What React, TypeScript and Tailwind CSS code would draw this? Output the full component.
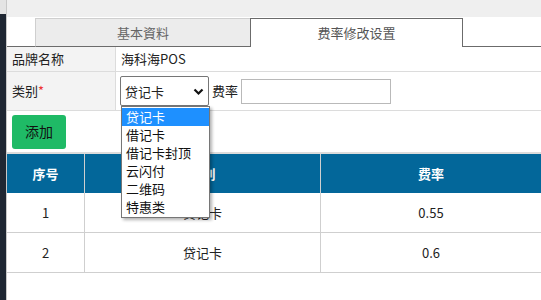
import { ReactNode } from "react";

const FONT = { fontFamily: '"Microsoft YaHei", "Noto Sans CJK SC", "Noto Sans", sans-serif' };

const OPTIONS = ["贷记卡", "借记卡", "借记卡封顶", "云闪付", "二维码", "特惠类"];

const ROWS = [
  { no: "1", type: "贷记卡", rate: "0.55" },
  { no: "2", type: "贷记卡", rate: "0.6" },
];

function Chevron() {
  return (
    <svg width="11" height="8" viewBox="0 0 11 8" className="shrink-0">
      <path d="M1.5 1.5 L5.5 5.5 L9.5 1.5" fill="none" stroke="#111" strokeWidth="2.2" />
    </svg>
  );
}

function Cell({ children, className = "" }: { children: ReactNode; className?: string }) {
  return <div className={"flex items-center justify-center " + className}>{children}</div>;
}

export default function App() {
  return (
    <div className="relative flex h-[300px] w-[541px] overflow-hidden bg-white text-[13px] text-[#222]" style={FONT}>
      {/* left window edge */}
      <div className="flex w-[6px] flex-col">
        <div className="h-[14px] bg-[#e4e4e4]" />
        <div className="flex-1 bg-[#1f2733]" />
      </div>
      <div className="w-px bg-[#c8c8c8]" />

      <div className="flex flex-1 flex-col">
        <div className="h-[17px] bg-[#efefef]" />

        {/* tabs */}
        <div className="flex h-[30px]">
          <div className="w-[28px] border-b border-[#6b6b6b]" />
          <div className="mt-px flex w-[215px] items-center justify-center border-l border-t border-[#cfcfcf] border-b-[#6b6b6b] border-b bg-[#ececec] text-[#666]">
            基本資料
          </div>
          <div className="mt-px flex w-[213px] items-center justify-center border-x border-t border-[#6b6b6b] bg-white text-[#555]">
            费率修改设置
          </div>
          <div className="flex-1 border-b border-[#6b6b6b]" />
        </div>

        {/* info rows */}
        <div className="flex h-[25px] border-b border-[#dcdcdc]">
          <div className="flex w-[109px] items-center border-r border-[#dcdcdc] bg-[#f3f3f3] pl-[5px]">品牌名称</div>
          <div className="flex items-center pl-[5px]">海科海POS</div>
        </div>
        <div className="flex h-[39px] border-b border-[#dcdcdc]">
          <div className="flex w-[109px] items-center border-r border-[#dcdcdc] bg-[#f3f3f3] pl-[5px]">
            类别<span className="text-[#e33]">*</span>
          </div>
          <div className="flex items-center pl-[4px]">
            <div className="flex h-[30px] w-[89px] items-center justify-between rounded-[2px] border border-[#767676] px-[4px] pt-[1px]">
              <span>贷记卡</span>
              <Chevron />
            </div>
            <span className="ml-[3px]">费率</span>
            <div className="ml-[3px] h-[25px] w-[150px] border border-[#b9b9b9]" />
          </div>
        </div>
        <div className="flex h-[41px] items-center pl-[5px]">
          <button className="h-[34px] w-[54px] rounded-[3px] bg-[#1fba66] text-[14px] text-[#111]">添加</button>
        </div>
        <div className="h-[2px] bg-[#dcdcdc]" />

        {/* table */}
        <div className="grid grid-cols-[78px_236px_1fr] bg-[#03679a] font-bold text-white">
          <Cell className="h-[39px] border-r border-[#cfcfcf]">序号</Cell>
          <Cell className="h-[39px] border-r border-[#cfcfcf]">类别</Cell>
          <Cell className="h-[39px]">费率</Cell>
        </div>
        {ROWS.map((r) => (
          <div key={r.no} className="grid grid-cols-[78px_236px_1fr] border-b border-[#cfcfcf]">
            <Cell className="h-[39px] border-r border-[#cfcfcf]">{r.no}</Cell>
            <Cell className="h-[39px] border-r border-[#cfcfcf]">{r.type}</Cell>
            <Cell className="h-[39px]">{r.rate}</Cell>
          </div>
        ))}
      </div>

      {/* open select list */}
      <div className="absolute left-[121px] top-[106px] flex w-[89px] flex-col border border-[#767676] bg-white py-px shadow-[2px_2px_3px_rgba(0,0,0,0.3)]">
        {OPTIONS.map((o, i) => (
          <div
            key={o}
            className={"h-[18px] pl-[4px] leading-[18px] " + (i === 0 ? "bg-[#1e90ff] text-white" : "text-[#111]")}
          >
            {o}
          </div>
        ))}
      </div>
    </div>
  );
}
